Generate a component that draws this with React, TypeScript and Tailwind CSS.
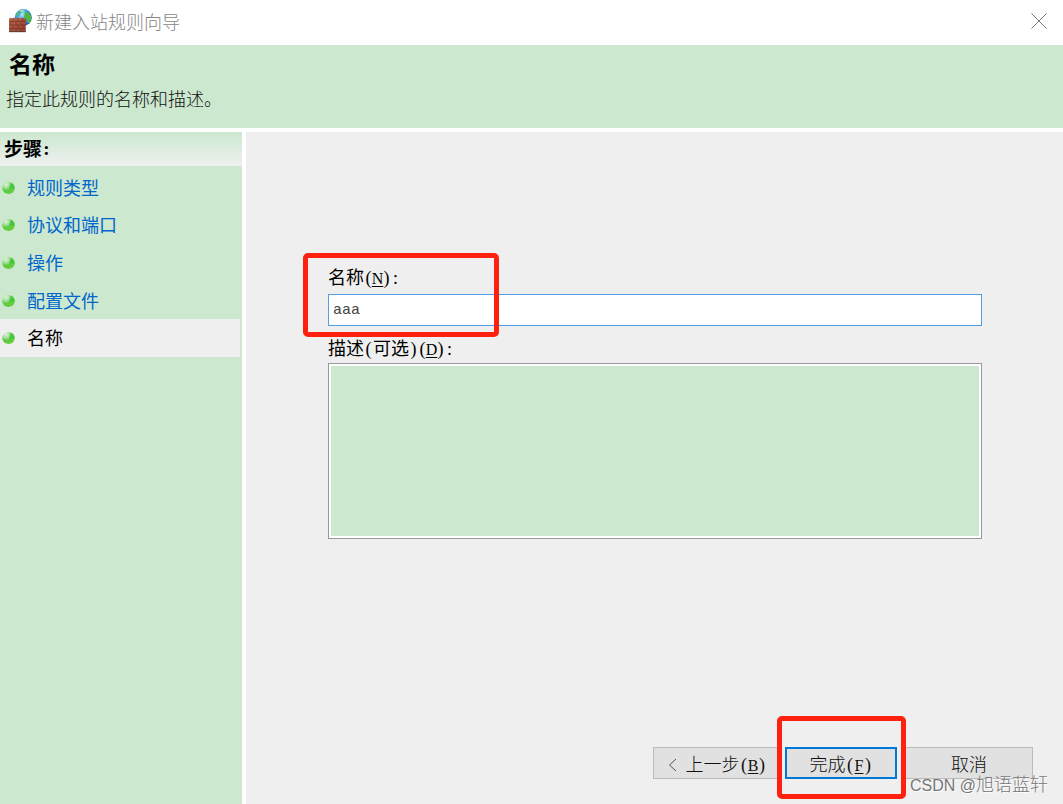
import { useState } from 'react';
import type { ReactNode } from 'react';

const steps = ['规则类型', '协议和端口', '操作', '配置文件', '名称'];

// One half-width cell of the dialog font, half as wide as a Chinese character
function Half({ children }: { children: ReactNode }) {
  return (
    <span className="inline-block w-[9px] text-center leading-none font-['Liberation_Serif',serif]">{children}</span>
  );
}

function AccessKey({ letter }: { letter: string }) {
  return (
    <>
      <Half>(</Half>
      <span className="inline-flex w-[9px] justify-center leading-none font-['Liberation_Serif',serif] text-[16px] underline underline-offset-2">
        {letter}
      </span>
      <Half>)</Half>
    </>
  );
}

function FirewallIcon() {
  return (
    <svg viewBox="0 0 24 24" className="w-6 h-6" aria-hidden="true">
      <defs>
        <radialGradient id="globe" cx="0.4" cy="0.3" r="0.75">
          <stop offset="0" stopColor="#b4ecfb" />
          <stop offset="0.45" stopColor="#3f9fe8" />
          <stop offset="1" stopColor="#1c45b0" />
        </radialGradient>
        <linearGradient id="wall" x1="0" y1="0" x2="1" y2="1">
          <stop offset="0" stopColor="#bd6850" />
          <stop offset="1" stopColor="#96402f" />
        </linearGradient>
      </defs>
      <circle cx="15.3" cy="8.6" r="8.5" fill="url(#globe)" />
      <path d="M7.500 5.500c1.500-3 4.500-5 7-5l1 2.300-2.600 1.200-.8 2.600-3 1.400z" fill="#4fb0a0" />
      <path d="M17.200 2.200l3.200 1.300 2.700 3.700.2 3.400-2 3.800-2-.6-.4-3.400-2.900-2.200.6-3z" fill="#4fb83c" />
      <path d="M11 1.800c2-1.200 4.600-1 6-.4l-3 1.600z" fill="#d6f5e4" opacity="0.8" />
      <path d="M1 9.800l1.500-1.300 1.500 1 2-1 2 1 2-1 2 1 2-1 2 1 1.800-.8V22.700H1z" fill="url(#wall)" />
      <path
        d="M1 12.500h16.800M1 16h16.800M1 19.400h16.800M5 9.500v3M10 9.500v3M15 9.500v3M3 12.500V16M8 12.500V16M13 12.500V16M5 16v3.400M10 16v3.400M15 16v3.400M3 19.400v3.300M8 19.400v3.300M13 19.400v3.300"
        stroke="#66261c"
        strokeWidth="0.5"
        fill="none"
      />
      <path d="M1 22.700h16.800" stroke="#3d2422" strokeWidth="0.8" />
    </svg>
  );
}

function StepBullet() {
  return (
    <svg viewBox="0 0 14 12" className="w-[14px] h-3 shrink-0" aria-hidden="true">
      <defs>
        <radialGradient id="bullet" cx="0.3" cy="0.2" r="0.85">
          <stop offset="0" stopColor="#dcf3d8" />
          <stop offset="0.35" stopColor="#a2dd97" />
          <stop offset="0.6" stopColor="#5ccb3c" />
          <stop offset="1" stopColor="#68cf40" />
        </radialGradient>
      </defs>
      <ellipse cx="7.500" cy="6" rx="6.300" ry="5.900" fill="url(#bullet)" />
      <path d="M9.500 1c3 .8 4 3 4 5.500L8 6.500z" fill="#38c53a" opacity="0.7" />
    </svg>
  );
}

export default function App() {
  const [name, setName] = useState('aaa');
  const [description, setDescription] = useState('');

  return (
    <div className="relative min-h-screen flex flex-col bg-[#efefef] font-['Noto_Sans_CJK_SC',sans-serif] text-[18px] leading-6 text-black">
      <header className="h-[45px] flex items-center bg-white pl-2 pr-4 pb-1">
        <FirewallIcon />
        <h1 className="ml-1 font-light text-[#858585]">新建入站规则向导</h1>
        <button type="button" aria-label="关闭" className="ml-auto">
          <svg viewBox="0 0 16 16" className="w-4 h-4" aria-hidden="true">
            <path d="M0.500 0.500l15 15M15.500 0.500l-15 15" stroke="#777" strokeWidth="1" />
          </svg>
        </button>
      </header>

      <section className="h-[83px] bg-[#cce8cf] px-[6px] pt-[6px]">
        <h2 className="ml-[3px] text-[23px] font-bold">名称</h2>
        <p className="mt-[11px] font-light text-[#111]">指定此规则的名称和描述。</p>
      </section>

      <div className="flex-1 flex border-t-4 border-white">
        <nav className="w-[246px] shrink-0 bg-[#cce8cf] border-r-4 border-white">
          <h3 className="h-[34px] flex items-center pl-1 pb-[2px] bg-linear-to-b from-[#cce8cf] to-[#efefef] text-[19px] font-bold">
            步骤<Half>:</Half>
          </h3>
          <ol className="mt-[3px] mr-[2px] h-[188px] grid grid-rows-5">
            {steps.map((step, i) => {
              const current = i === steps.length - 1;
              return (
                <li
                  key={step}
                  aria-current={current ? 'step' : undefined}
                  className={`flex items-center gap-3 pl-px ${current ? 'bg-[#efefef]' : ''}`}
                >
                  <StepBullet />
                  {current ? (
                    <span className="pb-[2px]">{step}</span>
                  ) : (
                    <a href="#" className="pb-[2px] text-[#0066cc]">
                      {step}
                    </a>
                  )}
                </li>
              );
            })}
          </ol>
        </nav>

        <main className="flex-1 flex flex-col pt-[132px]">
          <form className="flex-1 flex flex-col" onSubmit={(e) => e.preventDefault()}>
            <div className="flex flex-col pl-[82px] pr-[81px]">
              <label htmlFor="rule-name" className="h-6">
                名称
                <AccessKey letter="N" />
                <Half>:</Half>
              </label>
              <input
                id="rule-name"
                type="text"
                value={name}
                onChange={(e) => setName(e.target.value)}
                className="mt-[6px] h-8 px-1 bg-white border border-[#569de5] outline-none font-['Liberation_Mono',monospace] text-[15px] text-[#444]"
              />
              <label htmlFor="rule-description" className="mt-[9px] h-6">
                描述
                <Half>(</Half>可选<Half>)</Half>
                <AccessKey letter="D" />
                <Half>:</Half>
              </label>
              <textarea
                id="rule-description"
                value={description}
                onChange={(e) => setDescription(e.target.value)}
                className="mt-1 h-44 p-[2px] bg-[#cce8cf] bg-clip-content border border-[#999] outline-2 -outline-offset-3 outline-white resize-none"
              />
            </div>

            <div className="mt-auto flex justify-end pr-[30px] pb-[25px] font-light text-[#111]">
              <button type="button" className="w-[128px] h-8 bg-[#e1e1e1] border border-[#bbb]">
                <svg viewBox="0 0 9 14" className="inline-block w-[9px] h-[14px] mr-[9px] mb-[2px]" aria-hidden="true">
                  <path d="M8 1L1.500 7 8 13" fill="none" stroke="#555" strokeWidth="1" />
                </svg>
                上一步
                <AccessKey letter="B" />
              </button>
              <button type="submit" className="ml-1 w-28 h-8 bg-[#e1e1e1] border-2 border-[#0078d7]">
                完成
                <AccessKey letter="F" />
              </button>
              <button type="button" className="ml-2 w-[128px] h-8 bg-[#e1e1e1] border border-[#bbb]">
                取消
              </button>
            </div>
          </form>
        </main>
      </div>

      {/* highlight frames over the dialog */}
      <div className="pointer-events-none absolute left-[303px] top-[253px] w-[196px] h-[84px] rounded-[5px] border-5 border-[#ff2010]" />
      <div className="pointer-events-none absolute right-[157px] bottom-[5px] w-[129px] h-[83px] rounded-[5px] border-5 border-[#ff2010]" />

      <span className="pointer-events-none absolute right-[15px] bottom-[6px] font-light text-[#777] [text-shadow:1px_1px_1px_#fff]">
        <span className="font-['Liberation_Sans',sans-serif] text-[16px]">CSDN @</span>旭语蓝轩
      </span>
    </div>
  );
}
